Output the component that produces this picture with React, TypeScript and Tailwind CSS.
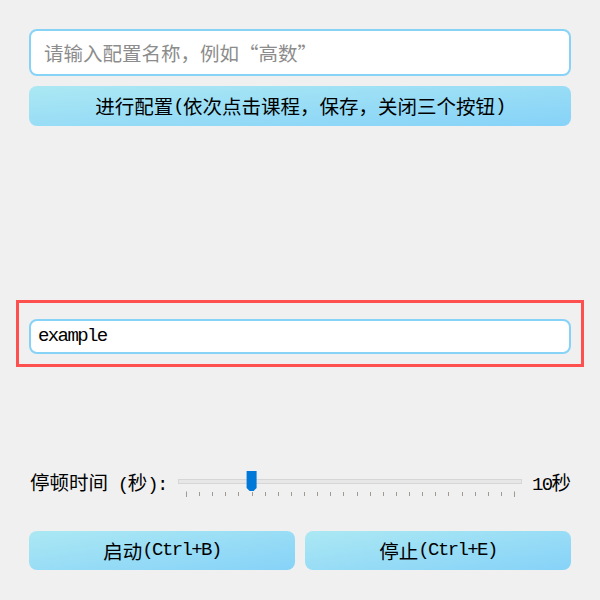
import React, { useState } from 'react';

// latin runs: mono face squeezed to half a CJK cell, like SimSun's half-width latin
function M({ children }: { children: React.ReactNode }) {
  return <span className="font-['Liberation_Mono',monospace] text-[19px] tracking-[-1.6px]">{children}</span>;
}

const TICKS = Array.from({ length: 26 }, (_, i) => i);

function PauseSlider({ value }: { value: number }) {
  const x0 = 8;
  const step = 13.12;
  const hx = x0 + value * step;
  return (
    <svg width="344" height="30" viewBox="0 0 344 30" className="shrink-0">
      <rect x="0.5" y="11.5" width="343" height="4" fill="#e7e7e7" stroke="#d6d6d6" />
      {TICKS.map(i => {
        const end = i === 0 || i === TICKS.length - 1;
        const x = Math.round(x0 + i * step) + 0.5;
        return <line key={i} x1={x} x2={x} y1={end ? 23.5 : 24} y2={end ? 29 : 28} stroke="#a09a90" strokeWidth="1" />;
      })}
      <path d={`M${hx - 5} 3 H${hx + 5} V20 L${hx + 2} 23 H${hx - 2} L${hx - 5} 20 Z`} fill="#0078d7" />
    </svg>
  );
}

export default function App() {
  const [name, setName] = useState('');
  const [example, setExample] = useState('example');
  const [pause] = useState(5);

  return (
    <div
      lang="zh-CN"
      className="w-[600px] h-[600px] bg-[#f0f0f0] flex flex-col px-4 pt-[29px] text-black font-['Noto_Sans_CJK_SC',sans-serif] text-[19.5px]"
    >
      <div className="px-[13px] flex flex-col gap-[10px]">
        <input
          value={name}
          onChange={e => setName(e.target.value)}
          placeholder="请输入配置名称，例如“高数”"
          className="h-[47px] w-full bg-white border-2 border-[#87d3f7] rounded-[8px] pl-[13px] outline-none placeholder:text-[#8c8c8c]"
        />
        <button className="h-[40px] w-full rounded-[8px] bg-linear-to-br from-[#abe8f3] to-[#86d2f8] flex items-center justify-center">
          进行配置<M>(</M>依次点击课程，保存，关闭三个按钮<M>)</M>
        </button>
      </div>

      <div className="h-[174px] shrink-0" />

      <div className="h-[67px] border-[3px] border-[#ff5050] px-[10px] pt-[15px]">
        <input
          value={example}
          onChange={e => setExample(e.target.value)}
          className="h-[35px] w-full bg-white border-2 border-[#87d3f7] rounded-[8px] pl-[7px] outline-none font-['Liberation_Mono',monospace] text-[19px] tracking-[-1.6px]"
        />
      </div>

      <div className="h-[101px] shrink-0" />

      <div className="h-[30px] px-[13px] flex items-center">
        <span className="w-[149px] shrink-0 pl-px">
          停顿时间<M> (</M>秒<M>):</M>
        </span>
        <PauseSlider value={pause} />
        <span className="ml-auto"><M>10</M>秒</span>
      </div>

      <div className="h-[33px] shrink-0" />

      <div className="px-[13px] flex gap-[10px]">
        <button className="h-[39px] flex-1 rounded-[8px] bg-linear-to-br from-[#abe8f3] to-[#86d2f8] flex items-center justify-center">
          启动<M>(Ctrl+B)</M>
        </button>
        <button className="h-[39px] flex-1 rounded-[8px] bg-linear-to-br from-[#abe8f3] to-[#86d2f8] flex items-center justify-center">
          停止<M>(Ctrl+E)</M>
        </button>
      </div>
    </div>
  );
}
